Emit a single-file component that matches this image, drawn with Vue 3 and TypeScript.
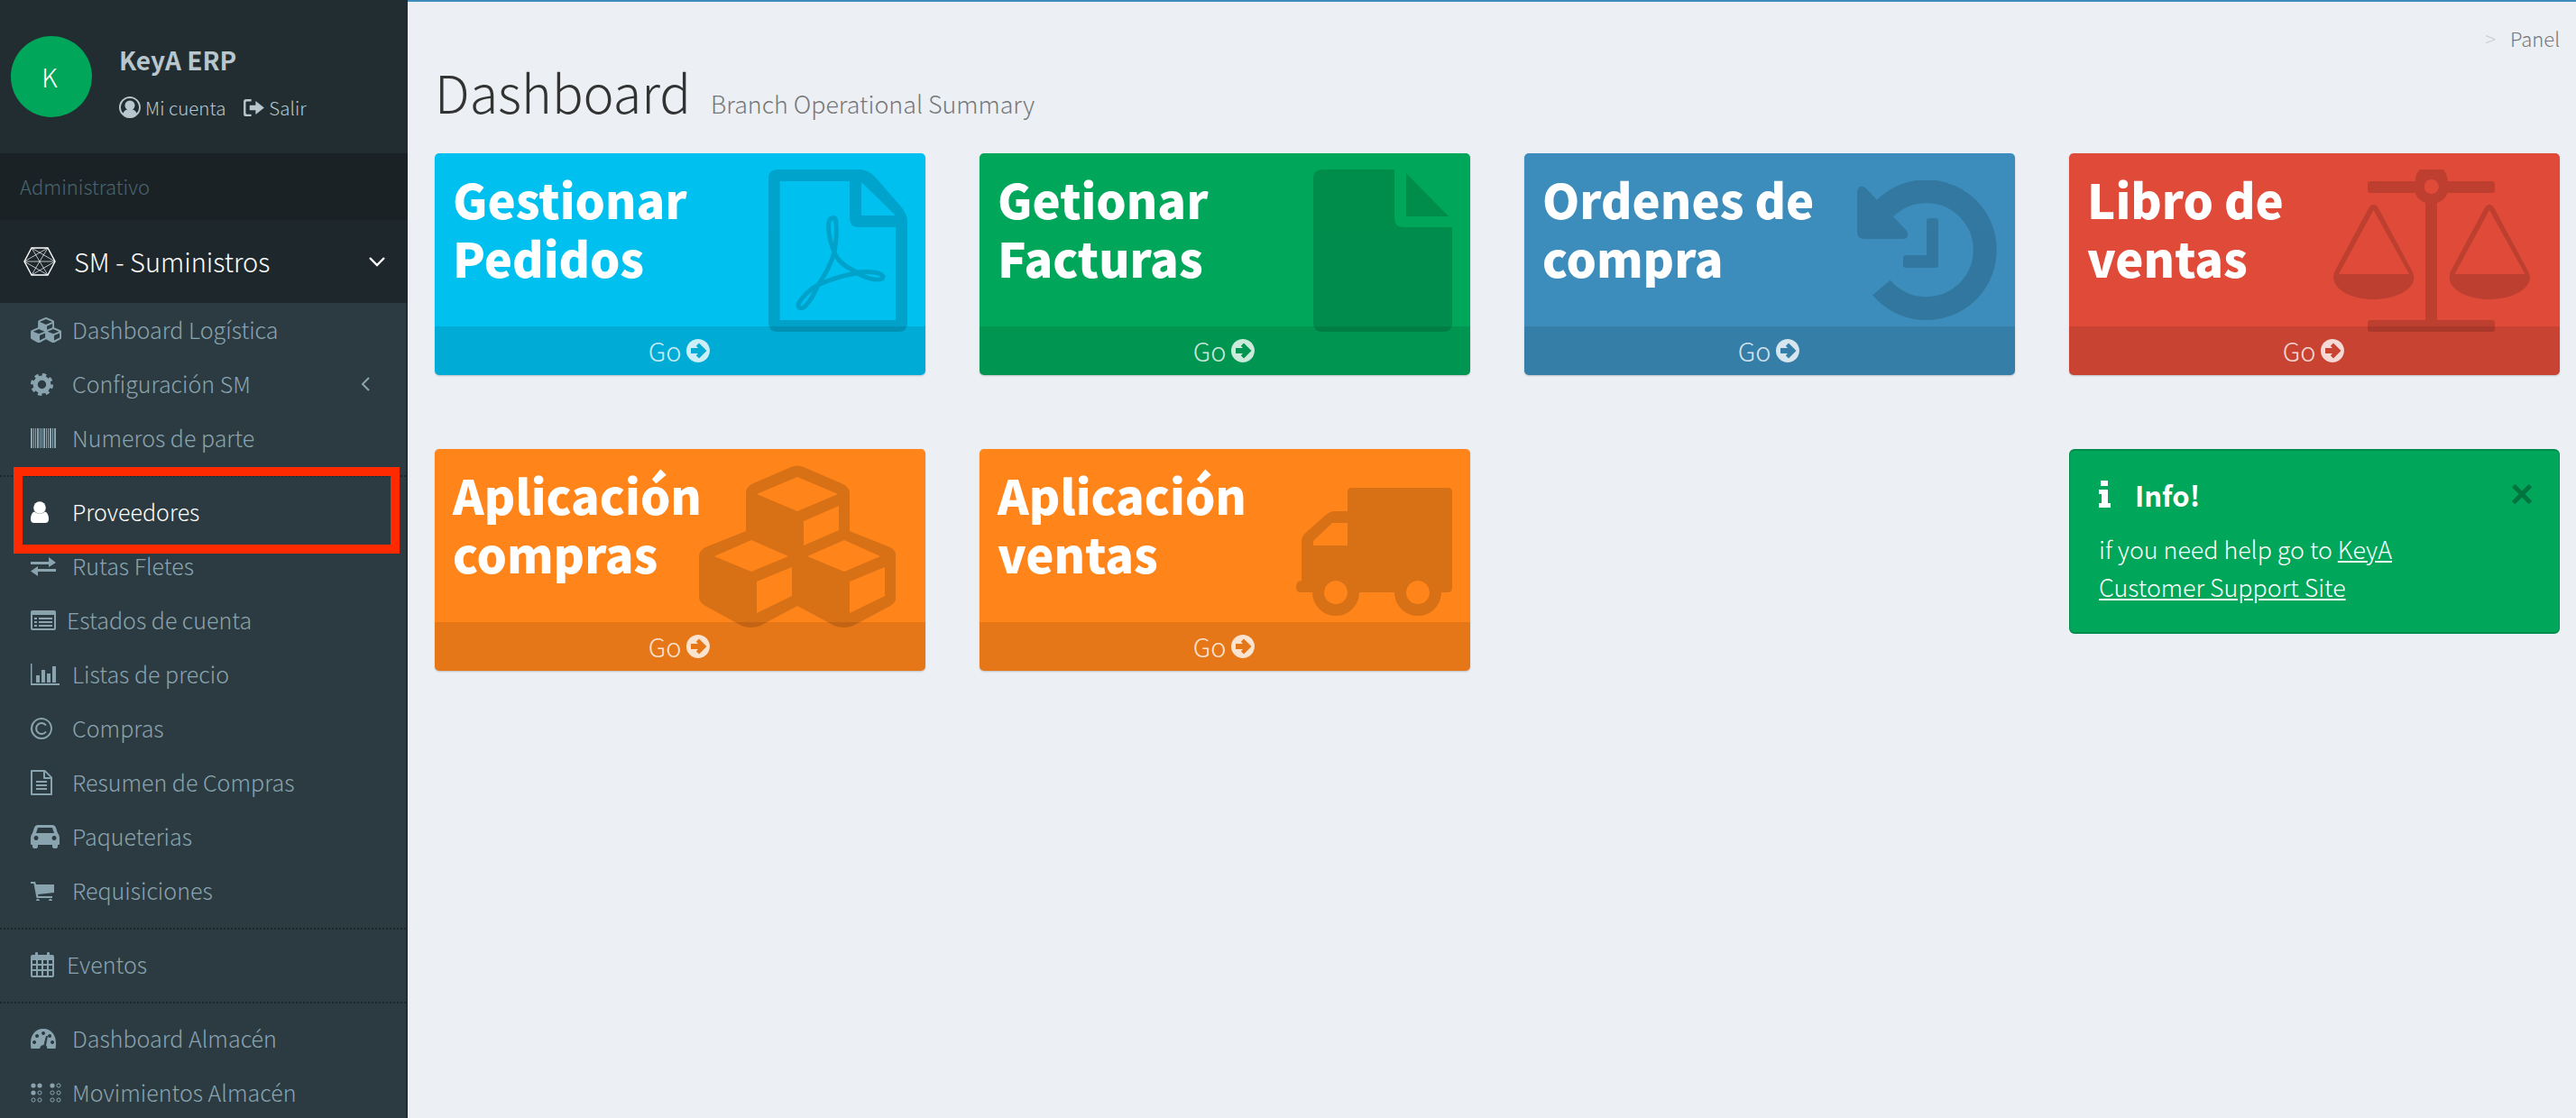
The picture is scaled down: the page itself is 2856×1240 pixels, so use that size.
<script setup lang="ts">
const cubesInner = `<path fill="currentColor" fill-rule="evenodd" d="M102 2Q109 -1 116 2L160 21Q167 25 167 31V73L212 91Q218.500 95 218.500 101V146Q218.500 152 212 156L171 178Q161 182 150 178L109 156L68 178Q57 182 47 178L7 156Q0 152 0 146V101Q0 95 7 91L52 73V31Q52 25 58 21ZM109 13L64 32L109 51L154 32ZM155 45L116 62V89L155 72ZM58 83L17 101L58 118L99 101ZM103 113L64 129V164L103 145ZM161 83L120 101L161 118L201 101ZM206 113L167 129V164L206 145Z"/>`

const fileSolid = `<path fill="currentColor" d="M10 0H90V54Q90 64 100 64H154V170Q154 180 144 180H10Q0 180 0 170V10Q0 0 10 0ZM103 4L150 52H103Z"/>`

const pdf = `<path fill="currentColor" fill-rule="evenodd" d="M10 0H100Q110 0 118 8L146 40Q154 49 154 58V170Q154 180 144 180H10Q0 180 0 170V10Q0 0 10 0ZM12.600 13V167H141V64H100Q90 64 90 54V13ZM103 14V51H141Z"/><path fill="none" stroke="currentColor" stroke-width="5" d="M71 54C67 54 66 58 67 70C68 82 72 88 73 92C69 105 62 118 55 128C47 132 36 142 33 150C33 155 38 155 42 150C47 145 52 135 55 128C68 122 85 117 98 115C108 120 120 124 126 121C130 117 122 112 98 114C85 108 76 100 73 92C75 80 76 70 75 62C75 55 74 52 71 54Z"/>`

const history = `<path fill="none" stroke="currentColor" stroke-width="26" d="M31 31A65 65 0 1 1 27 119"/><path fill="currentColor" d="M0 14Q1 3 9 8L55 56Q59 65 50 65H8Q0 65 0 57ZM77 45Q77 42 80 42H87Q90 42 90 45V94Q90 97 87 97H54Q51 97 51 94V86Q51 83 54 83H77Z"/>`

const pan = `M44.500 39Q48 39 50 43L87 112Q89.500 116 89.500 119C89.500 134 68 144 44.500 144C21 144 0 134 0 119Q0 116 2 112L39 43Q41 39 44.500 39ZM44.500 45L6 116H84Z`
const scale = `<g fill="currentColor"><path fill-rule="evenodd" d="${pan}"/><path fill-rule="evenodd" transform="translate(128.500 0)" d="${pan}"/><path fill-rule="evenodd" d="M41 13H90.700A18 19 0 0 1 126.700 13H176Q179 13 179 16V23Q179 26 176 26H126.700A18 19 0 0 1 115 37V167H176Q179 167 179 170V177Q179 180 176 180H41Q38 180 38 177V170Q38 167 41 167H102V37A18 19 0 0 1 90.700 26H41Q38 26 38 23V16Q38 13 41 13ZM108.700 11A8 8 0 1 0 108.800 11Z"/></g>`

const truck = `<g fill="currentColor"><path fill-rule="evenodd" d="M62 0H168Q173 0 173 5V111Q173 116 168 116H148A13 13 0 0 0 122 116H57A13 13 0 0 0 31 116H5Q0 116 0 110Q0 103 6 103V59Q6 54 11.500 49L33 30Q38 26 42 26H57V5Q57 0 62 0ZM40 39L19 59V64H57V39Z"/><circle cx="44" cy="116" r="19.500" fill="none" stroke="currentColor" stroke-width="13"/><circle cx="135" cy="116" r="19.500" fill="none" stroke="currentColor" stroke-width="13"/></g>`

interface Icon { vb: string; w: number; h: number; inner: string }
const ic = (vb: string, w: number, h: number, inner: string): Icon => ({ vb, w, h, inner })

const gear = `<circle cx="12" cy="12" r="7" fill="none" stroke="currentColor" stroke-width="5"/><circle cx="12" cy="12" r="10.300" fill="none" stroke="currentColor" stroke-width="3.400" stroke-dasharray="4.100 4"/>`
const barcode = `<path fill="currentColor" d="M0 0h2v22H0zM3 0h1v22H3zM5 0h1v22H5zM7 0h2v22H7zM10 0h1v22h-1zM12 0h1v22h-1zM14 0h2v22h-2zM17 0h1v22h-1zM19 0h1v22h-1zM21 0h2v22h-2zM24 0h1v22h-1zM26 0h2v22h-2z"/>`
const user = `<g fill="currentColor"><circle cx="10" cy="7" r="6.800"/><path d="M4 11.500Q10 16 16 11.500Q20 13 20 20Q20 24 16 24H4Q0 24 0 20Q0 13 4 11.500Z"/></g>`
const exchange = `<path fill="currentColor" d="M0 5H20V0L28 6L20 11V8H0ZM28 13H8V10L0 15.500L8 21V16H28Z"/>`
const listAlt = `<path fill="currentColor" fill-rule="evenodd" d="M2 0H26Q28 0 28 2V20Q28 22 26 22H2Q0 22 0 20V2Q0 0 2 0ZM2 5V20H26V5ZM4 8H7V10H4ZM4 12H7V14H4ZM4 16H7V18H4ZM9 8H24V10H9ZM9 12H24V14H9ZM9 16H24V18H9Z"/>`
const bars = `<path fill="currentColor" d="M0 0H1.500V22H32V24H0ZM6 13H10V21H6ZM12 7H16V21H12ZM18 11H22V21H18ZM24 3H28V21H24Z"/>`
const copyright = `<path fill="currentColor" fill-rule="evenodd" d="M12 0A12 12 0 1 1 11.900 0ZM12 2A10 10 0 1 0 12.100 2Z"/><path fill="none" stroke="currentColor" stroke-width="2" d="M17 8.500A6 6 0 1 0 17 15.500"/>`
const fileText = `<path fill="currentColor" fill-rule="evenodd" d="M1 0H16L24 8V27Q24 28 23 28H1Q0 28 0 27V1Q0 0 1 0ZM2 2V26H22V10H15Q14 10 14 9V2ZM16 2.500V8H21.500ZM6 12H18V14H6ZM6 16H18V18H6ZM6 20H18V22H6Z"/>`
const car = `<path fill="currentColor" fill-rule="evenodd" d="M8 0H24Q27 0 28 3L30 9Q32 11 32 14V21Q32 22 31 22H30V24Q30 26 27 26T24 24V22H8V24Q8 26 5 26T2 24V22H1Q0 22 0 21V14Q0 11 2 9L4 3Q5 0 8 0ZM8 3L6 9H26L24 3ZM6 12A2.500 2.500 0 1 0 6.100 12ZM26 12A2.500 2.500 0 1 0 26.100 12Z"/>`
const cart = `<path fill="currentColor" d="M0 0H5L6 3H26V12L8 14L8.500 16H24V18H6.500L3.500 2H0ZM8 19A2 2 0 1 1 7.900 19ZM22 19A2 2 0 1 1 21.900 19Z"/>`
const calendar = `<path fill="currentColor" fill-rule="evenodd" d="M5 3V1Q5 0 6.500 0T8 1V3H18V1Q18 0 19.500 0T21 1V3H24Q26 3 26 5V26Q26 28 24 28H2Q0 28 0 26V5Q0 3 2 3ZM2 9V13H6V9ZM8 9V13H12V9ZM14 9V13H18V9ZM20 9V13H24V9ZM2 15V19H6V15ZM8 15V19H12V15ZM14 15V19H18V15ZM20 15V19H24V15ZM2 21V26H6V21ZM8 21V26H12V21ZM14 21V26H18V21ZM20 21V26H24V21Z"/>`
const gauge = `<path fill="currentColor" fill-rule="evenodd" d="M14 0C23 0 28 7 28 16Q28 19 27.500 22H18Q19 20 17 18.500L19 8L17 8L14.500 18Q11 18 10 22H0.500Q0 19 0 16C0 7 5 0 14 0ZM14 3A2 2 0 1 0 14.100 3ZM7 6A2 2 0 1 0 7.100 6ZM4 13A2 2 0 1 0 4.100 13ZM24 13A2 2 0 1 0 24.100 13ZM21 6A2 2 0 1 0 21.100 6Z"/>`
const braille = (() => {
  const cols = [3, 10, 24, 31]
  const rows = [3, 11, 19]
  const filled = ['0-0', '1-0', '2-0', '0-1']
  let out = ''
  rows.forEach((y, r) => cols.forEach((x, c) => {
    out += filled.includes(`${c}-${r}`)
      ? `<circle cx="${x}" cy="${y}" r="2.600" fill="currentColor"/>`
      : `<circle cx="${x}" cy="${y}" r="2.100" fill="none" stroke="currentColor" stroke-width="1"/>`
  }))
  return out
})()

const cubesSmall = ic('0 0 218 180', 34, 28, cubesInner)

interface Item { label: string; icon: Icon; tight?: boolean; active?: boolean; caret?: boolean; sep?: boolean; mark?: boolean }
const items: Item[] = [
  { label: 'Dashboard Logística', icon: cubesSmall },
  { label: 'Configuración SM', icon: ic('0 0 24 24', 25, 25, gear), caret: true },
  { label: 'Numeros de parte', icon: ic('0 0 28 22', 28, 22, barcode) },
  { label: 'Proveedores', icon: ic('0 0 20 24', 20, 24, user), active: true, sep: true, mark: true },
  { label: 'Rutas Fletes', icon: ic('0 0 28 21', 28, 21, exchange) },
  { label: 'Estados de cuenta', icon: ic('0 0 28 22', 28, 22, listAlt), tight: true },
  { label: 'Listas de precio', icon: ic('0 0 32 24', 32, 24, bars) },
  { label: 'Compras', icon: ic('0 0 24 24', 24, 24, copyright) },
  { label: 'Resumen de Compras', icon: ic('0 0 24 28', 24, 28, fileText) },
  { label: 'Paqueterias', icon: ic('0 0 32 26', 32, 26, car) },
  { label: 'Requisiciones', icon: ic('0 0 26 21', 26, 21, cart) },
  { label: 'Eventos', icon: ic('0 0 26 28', 26, 28, calendar), tight: true, sep: true },
  { label: 'Dashboard Almacén', icon: ic('0 0 28 22', 28, 22, gauge), sep: true },
  { label: 'Movimientos Almacén', icon: ic('0 0 34 22', 34, 22, braille) }
]

interface Card { title: string; color: string; icon: Icon; right: number; top: number }
const cards: Card[] = [
  { title: 'Gestionar\nPedidos', color: '#00c0ef', icon: ic('0 0 154 180', 154, 180, pdf), right: 20, top: 18 },
  { title: 'Getionar\nFacturas', color: '#00a65a', icon: ic('0 0 154 180', 154, 180, fileSolid), right: 20, top: 18 },
  { title: 'Ordenes de\ncompra', color: '#3c8dbc', icon: ic('0 0 155 155', 155, 155, history), right: 20, top: 30 },
  { title: 'Libro de\nventas', color: '#e04b39', icon: ic('0 0 218 180', 218, 180, scale), right: 33, top: 18 },
  { title: 'Aplicación\ncompras', color: '#ff851b', icon: ic('0 0 218 180', 218, 180, cubesInner), right: 33, top: 18 },
  { title: 'Aplicación\nventas', color: '#ff851b', icon: ic('0 0 173 142', 173, 142, truck), right: 20, top: 43 }
]
</script>

<template>
  <div class="page">
    <aside class="sidebar">
      <div class="user-panel">
        <div class="avatar">K</div>
        <div class="user-info">
          <div class="user-name">KeyA ERP</div>
          <div class="user-links">
            <span class="user-link">
              <svg class="link-ico" viewBox="0 0 24 24" width="24" height="24"><path fill="currentColor" fill-rule="evenodd" d="M12 0A12 12 0 1 1 11.900 0ZM12 2A10 10 0 0 0 4.500 18.600Q6 15 9 14.500A5.500 5.500 0 1 1 15 14.500Q18 15 19.500 18.600A10 10 0 0 0 12 2Z"/></svg>
              Mi cuenta
            </span>
            <span class="user-link">
              <svg class="link-ico" viewBox="0 0 24 20" width="23" height="19"><path fill="currentColor" d="M3 0H9V2.500H4Q2.500 2.500 2.500 4V16Q2.500 17.500 4 17.500H9V20H3Q0 20 0 17V3Q0 0 3 0ZM14 2L24 10L14 18V13H7V7H14Z"/></svg>
              Salir
            </span>
          </div>
        </div>
      </div>
      <div class="section-label">Administrativo</div>
      <div class="tree-head">
        <svg class="hex" viewBox="0 0 36 32" width="36" height="32" fill="none" stroke="currentColor">
          <path stroke-width="1.400" d="M9 1H27L35 16L27 31H9L1 16Z"/>
          <path stroke-width="0.700" d="M9 1L27 31M27 1L9 31M1 16H35M9 1L35 16M27 1L1 16M9 31L35 16M27 31L1 16"/>
        </svg>
        <span class="tree-title">SM - Suministros</span>
        <svg class="chev" viewBox="0 0 18 11" width="18" height="11"><path fill="none" stroke="currentColor" stroke-width="2.400" d="M1 1L9 9L17 1"/></svg>
      </div>
      <ul class="tree">
        <li v-for="it in items" :key="it.label" class="tree-item" :class="{ sep: it.sep }">
          <div class="row" :class="{ active: it.active }">
            <span class="row-ico" :class="{ tight: it.tight }">
              <svg :viewBox="it.icon.vb" :width="it.icon.w" :height="it.icon.h" v-html="it.icon.inner"></svg>
            </span>
            <span class="row-label">{{ it.label }}</span>
            <svg v-if="it.caret" class="caret" viewBox="0 0 10 16" width="10" height="16"><path fill="none" stroke="currentColor" stroke-width="2" d="M9 1L2 8L9 15"/></svg>
            <span v-if="it.mark" class="mark"></span>
          </div>
        </li>
      </ul>
    </aside>

    <main class="main">
      <div class="crumbs"><span class="crumb-sep">&gt;</span><span>Panel</span></div>
      <div class="title-row">
        <h1 class="title">Dashboard</h1>
        <span class="subtitle">Branch Operational Summary</span>
      </div>
      <div class="grid">
        <section v-for="c in cards" :key="c.title" class="card" :style="{ backgroundColor: c.color }">
          <h3 class="card-title">{{ c.title }}</h3>
          <svg class="card-ico" :viewBox="c.icon.vb" :width="c.icon.w" :height="c.icon.h" :style="{ right: c.right + 'px', top: c.top + 'px' }" v-html="c.icon.inner"></svg>
          <div class="card-foot">
            <span>Go</span>
            <svg class="go-ico" viewBox="0 0 26 26" width="26" height="26"><path fill="currentColor" fill-rule="evenodd" d="M13 0A13 13 0 1 1 12.900 0ZM14 4.500L10.800 7.700L13 10H5V16H13L10.800 18.300L14 21.500L22.500 13Z"/></svg>
          </div>
        </section>
        <section class="alert">
          <div class="alert-head">
            <svg class="info-ico" viewBox="0 0 13 30" width="13" height="30"><path fill="currentColor" d="M2 0H10V6H2ZM0 10H10V25H13V30H0V25H3V15H0Z"/></svg>
            <span class="alert-title">Info!</span>
            <span class="alert-close">×</span>
          </div>
          <p class="alert-text">if you need help go to <a class="alert-link">KeyA Customer Support Site</a></p>
        </section>
      </div>
    </main>
  </div>
</template>

<style>
html, body { margin: 0; overflow: hidden; background: #ecf0f5; }
</style>

<style scoped>
.page {
  display: flex;
  width: 2856px;
  height: 1240px;
  overflow: hidden;
  font-family: "Noto Sans CJK SC", "Noto Sans", sans-serif;
  font-weight: 300;
  background: #ecf0f5;
}
.sidebar {
  width: 452px;
  flex: none;
  background: #222d32;
  overflow: hidden;
}
.user-panel {
  height: 170px;
  box-sizing: border-box;
  padding: 40px 0 0 12px;
  display: flex;
  gap: 30px;
  color: #b8c7ce;
}
.avatar {
  width: 90px;
  height: 90px;
  border-radius: 50%;
  background: #00a65a;
  color: #fff;
  display: flex;
  align-items: center;
  justify-content: center;
  font-size: 28px;
  padding-right: 4px;
  box-sizing: border-box;
}
.user-name {
  font-size: 28px;
  font-weight: 700;
  line-height: 40px;
  margin-top: 6px;
}
.user-links {
  display: flex;
  gap: 20px;
  margin-top: 16px;
  font-size: 20.500px;
  line-height: 34px;
}
.user-link { display: flex; align-items: center; gap: 5px; }
.link-ico { flex: none; }
.section-label {
  height: 74px;
  line-height: 72px;
  padding-left: 22px;
  background: #1a2226;
  color: #4b646f;
  font-size: 22px;
}
.tree-head {
  height: 92px;
  background: #1e282c;
  color: #fff;
  display: flex;
  align-items: center;
  padding-left: 26px;
}
.hex { flex: none; }
.tree-title { margin-left: 20px; font-size: 29px; padding-bottom: 2px; }
.chev { margin-left: auto; margin-right: 25px; }
.tree {
  list-style: none;
  margin: 0;
  padding: 0;
  width: 450px;
  background: #2c3b41;
  height: 920px;
}
.tree-item.sep {
  margin-top: 11px;
  padding-top: 11px;
  background-image: linear-gradient(90deg, #1f2629 50%, transparent 50%);
  background-size: 4px 2px;
  background-repeat: repeat-x;
  background-position: 4px 0;
}
.row {
  position: relative;
  height: 60px;
  display: flex;
  align-items: center;
  padding-left: 34px;
  color: #8aa4af;
  font-size: 25px;
}
.row.active { color: #fff; }
.row-ico {
  width: 46px;
  flex: none;
  display: flex;
  align-items: center;
}
.row-ico.tight { width: 40px; }
.row-label { padding-bottom: 3px; }
.caret { margin-left: auto; margin-right: 40px; }
.mark {
  position: absolute;
  left: 15px;
  top: -20px;
  width: 428px;
  height: 96px;
  box-sizing: border-box;
  border: 10px solid #ff2a00;
}
.main {
  flex: 1;
  min-width: 0;
  border-top: 2px solid #3c8dbc;
  padding: 0 18px 0 30px;
}
.crumbs {
  display: flex;
  justify-content: flex-end;
  gap: 16px;
  height: 28px;
  margin-top: 26px;
  font-size: 22px;
  line-height: 28px;
  color: #777;
}
.crumb-sep { color: #ccc; }
.title-row {
  display: flex;
  align-items: baseline;
  gap: 22px;
  height: 114px;
  padding: 4px 0 0;
  box-sizing: border-box;
}
.title {
  margin: 0;
  font-size: 57.500px;
  font-weight: 300;
  line-height: 82px;
  color: #333;
}
.subtitle { font-size: 26.800px; color: #777; }
.grid {
  display: grid;
  grid-template-columns: repeat(4, 544px);
  column-gap: 60px;
  row-gap: 82px;
}
.card {
  position: relative;
  height: 246px;
  border-radius: 5px;
  box-shadow: 0 1px 2px rgba(0, 0, 0, 0.2);
  color: #fff;
  overflow: hidden;
}
.card-title {
  margin: 0;
  height: 192px;
  box-sizing: border-box;
  padding: 18px 0 0 20px;
  font-size: 52.500px;
  font-weight: 900;
  line-height: 65px;
  white-space: pre-line;
}
.card-ico {
  position: absolute;
  color: #000;
  opacity: 0.15;
}
.card-foot {
  height: 54px;
  background: rgba(0, 0, 0, 0.1);
  color: rgba(255, 255, 255, 0.8);
  display: flex;
  align-items: center;
  justify-content: center;
  gap: 6px;
  font-size: 29px;
  padding-right: 2px;
}
.card-foot span { padding-bottom: 3px; }
.go-ico { flex: none; }
.alert {
  grid-column: 4;
  grid-row: 2;
  height: 205px;
  box-sizing: border-box;
  padding: 28px 20px 0 32px;
  border: 2px solid #008d4c;
  border-width: 2px 1px;
  border-radius: 6px;
  background: #00a65a;
  color: #fff;
}
.alert-head {
  display: flex;
  align-items: center;
  height: 40px;
}
.alert-title {
  margin-left: 27px;
  font-size: 31px;
  font-weight: 700;
}
.alert-close {
  margin-left: auto;
  margin-right: 8px;
  font-family: "Liberation Sans", sans-serif;
  font-size: 44px;
  line-height: 40px;
  font-weight: 700;
  color: #000;
  opacity: 0.3;
}
.info-ico { flex: none; }
.alert-text {
  margin: 20px 0 0;
  width: 380px;
  font-size: 26.800px;
  line-height: 42px;
}
.alert-link { color: #fff; text-decoration: underline; }
</style>
